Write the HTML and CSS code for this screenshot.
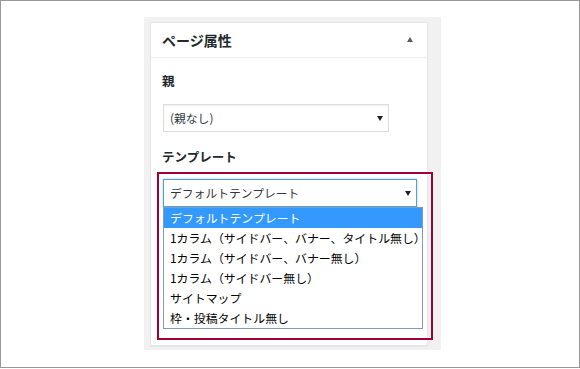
FILE: index.html
```html
<!DOCTYPE html>
<html lang="ja">
<head>
    <meta charset="UTF-8">
    <title>ページ属性</title>
    <link rel="stylesheet" href="styles.css">
</head>
<body>
    <div class="frame">
        <div class="panel">
            <div class="card">
                <div class="card-head">
                    <h2 class="card-title">ページ属性</h2>
                    <span class="toggle"></span>
                </div>
                <div class="card-body">
                    <p class="field-label">親</p>
                    <div class="select select-parent">(親なし)<span class="caret"></span></div>
                    <p class="field-label label-template">テンプレート</p>
                    <div class="select select-template is-focus">デフォルトテンプレート<span class="caret"></span></div>
                </div>
                <ul class="dropdown">
                    <li class="selected">デフォルトテンプレート</li>
                    <li>1カラム（サイドバー、バナー、タイトル無し）</li>
                    <li>1カラム（サイドバー、バナー無し）</li>
                    <li>1カラム（サイドバー無し）</li>
                    <li>サイトマップ</li>
                    <li>枠・投稿タイトル無し</li>
                </ul>
            </div>
            <div class="highlight"></div>
        </div>
    </div>
</body>
</html>
```

FILE: styles.css
```css
body {
    margin: 0;
    background: #fff;
    font-family: 'Noto Sans CJK JP', 'Liberation Sans', sans-serif;
    color: #23282d;
}
.frame {
    width: 578px;
    height: 366px;
    border: 1px solid #999;
    background: #fff;
}
.panel {
    position: relative;
    box-sizing: border-box;
    width: 297px;
    height: 333px;
    margin: 16px 0 0 143px;
    padding: 5px 0 0 6px;
    background: #f1f1f1;
}
.card {
    position: relative;
    box-sizing: border-box;
    width: 278px;
    height: 324px;
    background: #fff;
    border: 1px solid #e5e5e5;
    box-shadow: 0 1px 1px rgba(0, 0, 0, 0.04);
}
.card-head {
    display: flex;
    align-items: center;
    justify-content: space-between;
    height: 34px;
    padding: 0 14px 0 11px;
    border-bottom: 1px solid #eee;
}
.card-title {
    margin: 0;
    font-size: 14px;
    font-weight: 600;
    line-height: 20px;
    color: #23282d;
}
.toggle {
    width: 0;
    height: 0;
    border-left: 3.5px solid transparent;
    border-right: 3.5px solid transparent;
    border-bottom: 5px solid #555d66;
    margin-top: -1px;
}
.card-body {
    padding: 13px 12px 0 11px;
}
.field-label {
    margin: 0;
    font-size: 12.5px;
    font-weight: bold;
    line-height: 20px;
    color: #23282d;
}
.label-template {
    margin-top: 15px;
}
.select {
    position: relative;
    box-sizing: border-box;
    height: 28px;
    margin: 13px 0 0 1px;
    padding: 0 0 0 6px;
    border: 1px solid #ddd;
    box-shadow: inset 0 1px 2px rgba(0, 0, 0, 0.07);
    font-size: 11.8px;
    line-height: 26px;
    color: #32373c;
    background: #fff;
}
.select-parent {
    width: 226px;
}
.select-template {
    width: 254px;
    margin-top: 12px;
}
.select.is-focus {
    border-color: #5b9dd9;
    box-shadow: 0 0 2px rgba(30, 140, 190, 0.5);
}
.caret {
    position: absolute;
    right: 5px;
    top: 11px;
    width: 0;
    height: 0;
    border-left: 3.5px solid transparent;
    border-right: 3.5px solid transparent;
    border-top: 5px solid #222;
}
.dropdown {
    position: absolute;
    left: 12px;
    top: 184px;
    box-sizing: border-box;
    width: 260px;
    margin: 0;
    padding: 0;
    list-style: none;
    background: #fff;
    border: 1px solid #7f9db9;
    z-index: 2;
}
.dropdown li {
    height: 20px;
    padding-left: 6px;
    font-size: 11.9px;
    line-height: 20px;
    color: #000;
    white-space: nowrap;
}
.dropdown li.selected {
    background: #3399ff;
    color: #fff;
}
.highlight {
    position: absolute;
    left: 13px;
    top: 155px;
    box-sizing: border-box;
    width: 276px;
    height: 168px;
    border: 2px solid #a0003a;
    z-index: 3;
}
```
